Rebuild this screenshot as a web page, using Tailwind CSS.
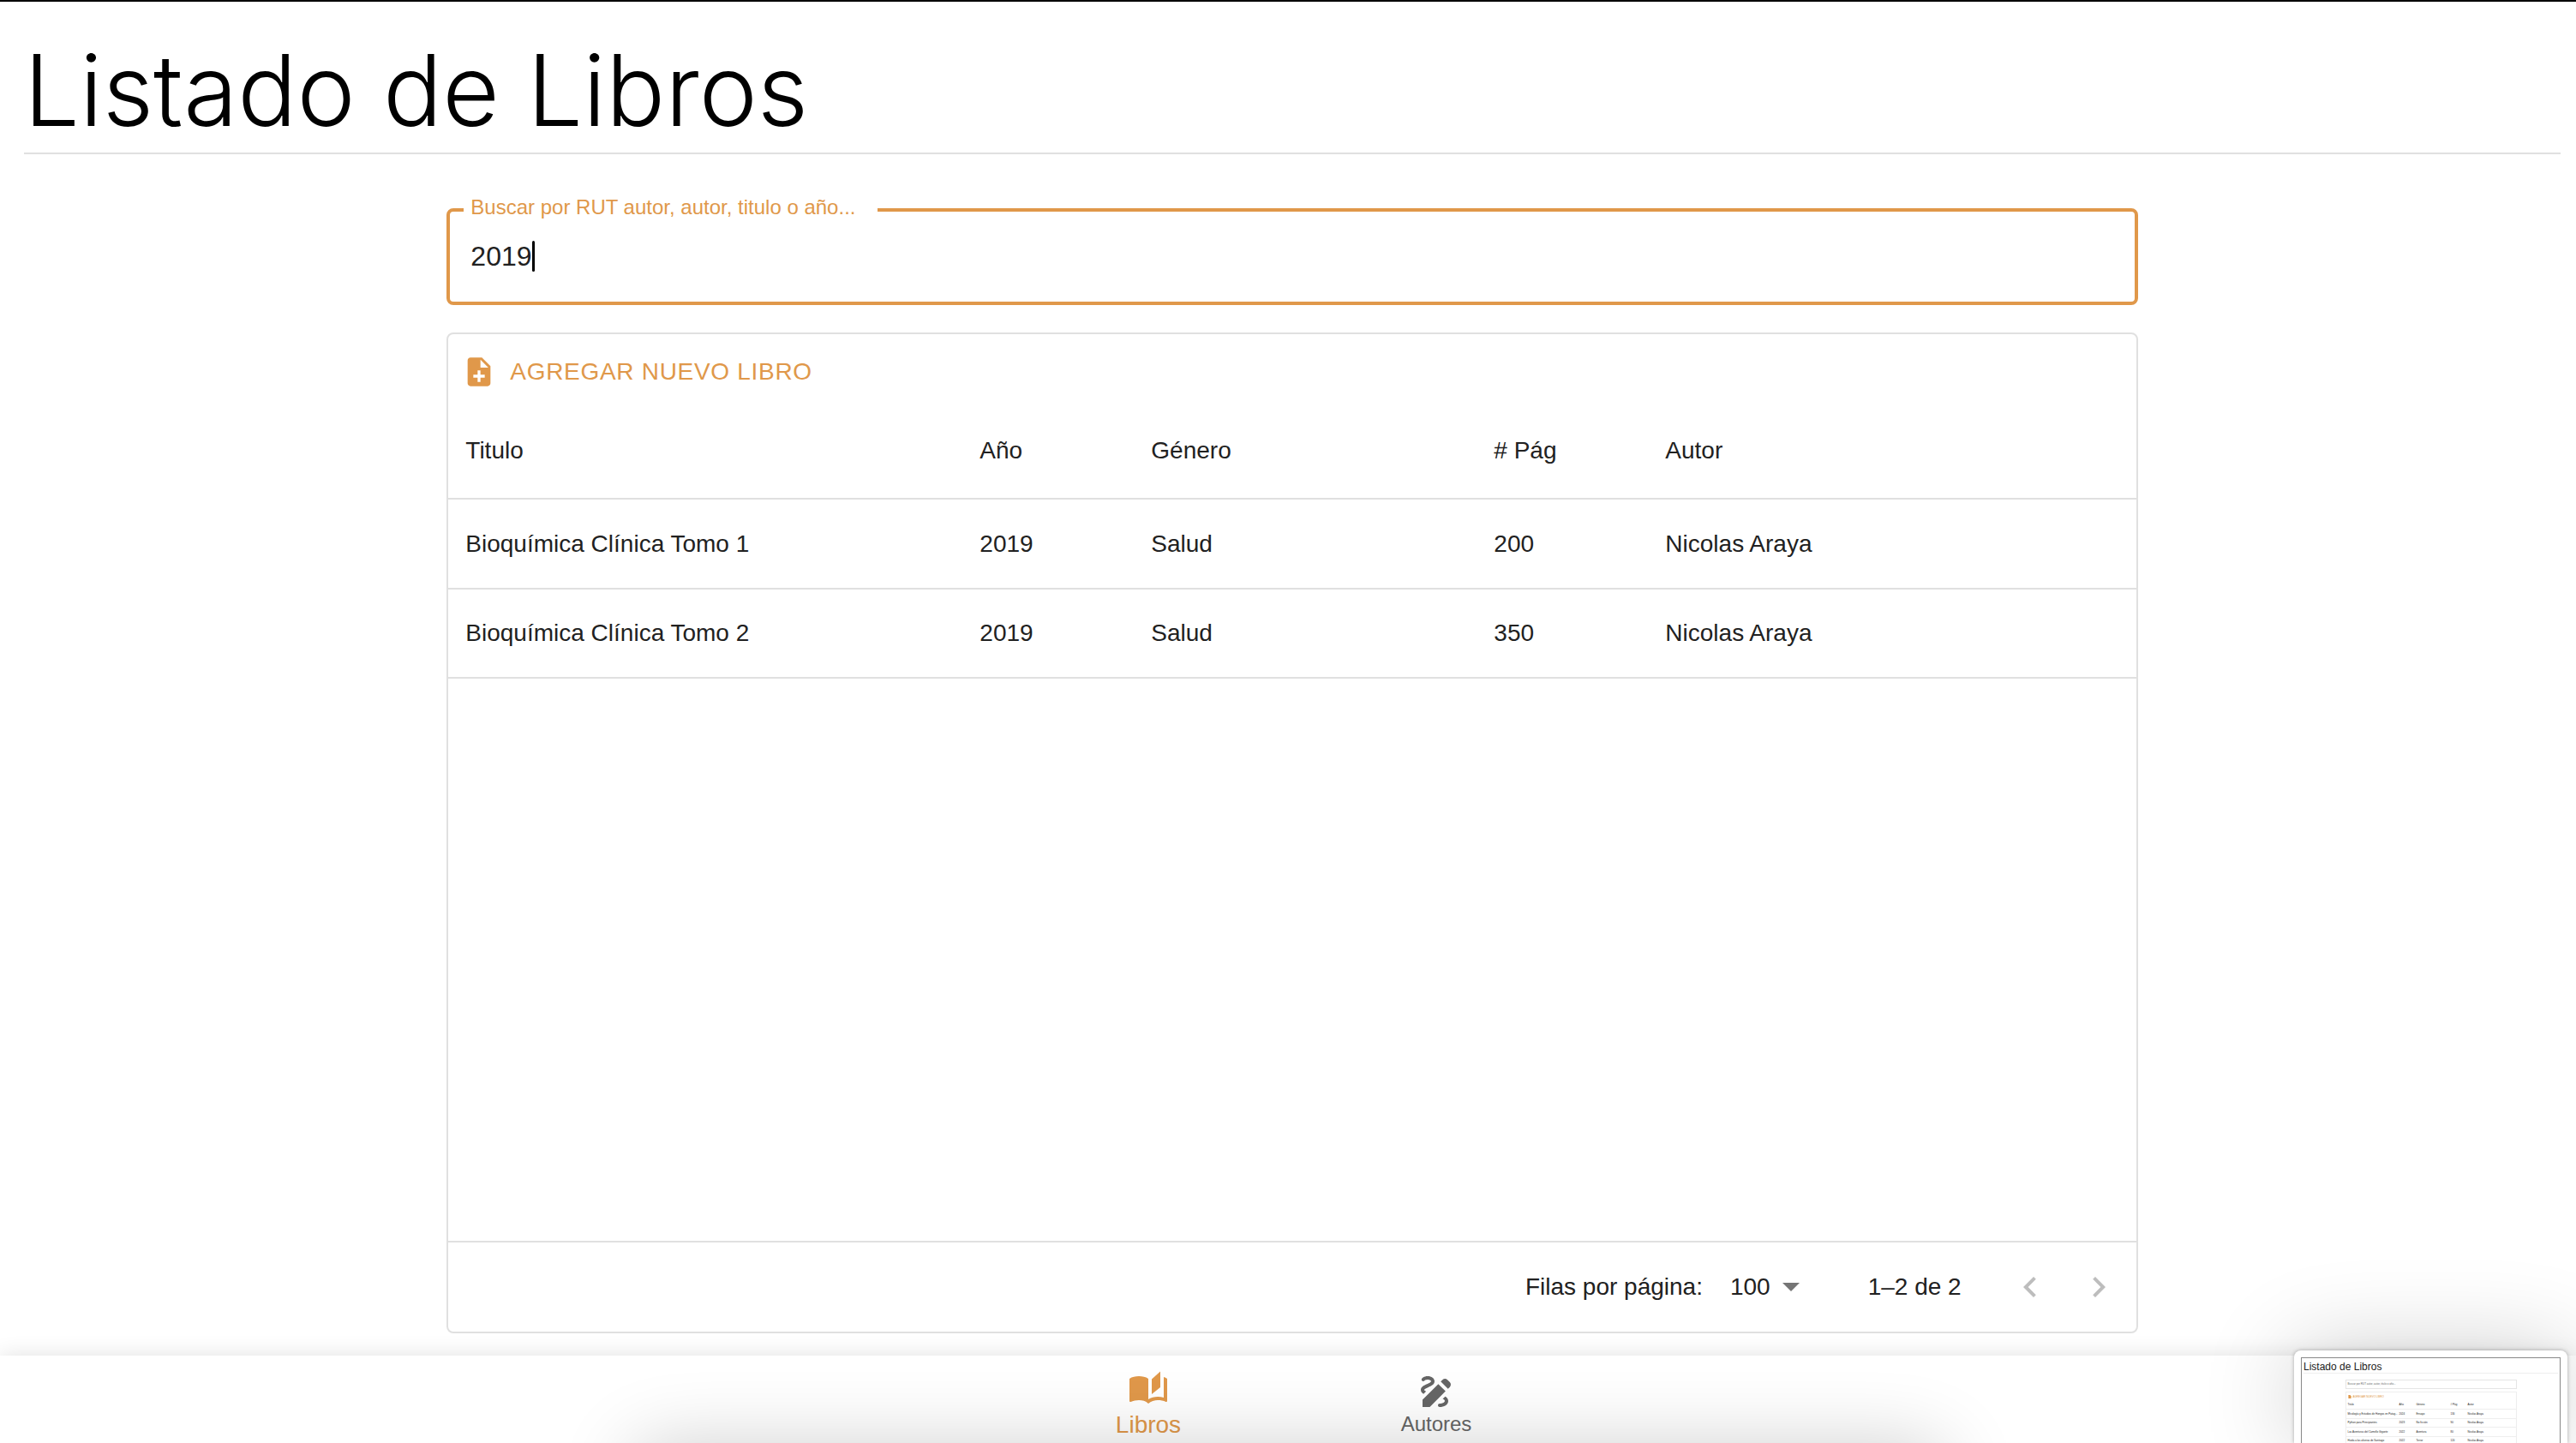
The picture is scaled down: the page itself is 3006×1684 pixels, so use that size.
<!DOCTYPE html>
<html lang="es">
<head>
<meta charset="utf-8">
<meta name="viewport" content="width=device-width, initial-scale=1">
<title>Listado de Libros</title>
<script src="https://cdn.jsdelivr.net/npm/@tailwindcss/browser@4"></script>
</head>
<body class="relative flex min-h-screen flex-col border-t-2 border-black bg-white font-['Liberation_Sans',Arial,sans-serif] text-[28px] leading-10 text-[#212121]">

<main class="flex flex-1 flex-col pr-[18px] pl-7">
  <header class="border-b-2 border-[#e0e0e0] pt-8">
    <h1 class="h-36 font-['Inter',sans-serif] text-[115px] leading-[144px] font-light text-black">Listado de Libros</h1>
  </header>

  <div class="grid flex-1 grid-cols-12 pt-[50px] pb-[26px]">
    <div class="col-span-8 col-start-3 flex flex-col">
      <fieldset class="rounded-lg border-4 border-[#e0984a] px-4">
        <legend class="pr-[26px] pb-[6px] pl-2 text-2xl leading-6 text-[#e0984a]"><label for="buscar">Buscar por RUT autor, autor, titulo o año...</label></legend>
        <div class="flex h-[92px] items-center pb-[14px] pl-2">
          <input id="buscar" type="text" value="2019" class="field-sizing-content text-[32px] leading-10 outline-none">
          <span class="h-9 w-[3px] rounded-full bg-black"></span>
        </div>
      </fieldset>

      <section class="mt-8 flex flex-1 flex-col rounded-lg border-2 border-[#e0e0e0]">
        <div class="flex h-20 items-center px-4 pt-2">
          <button type="button" class="flex items-center gap-4 tracking-wide text-[#e0984a] uppercase">
            <svg class="size-10" viewBox="0 0 24 24" fill="currentColor" aria-hidden="true"><path d="M14 2H6c-1.1 0-1.99.9-1.99 2L4 20c0 1.1.89 2 1.99 2H18c1.1 0 2-.9 2-2V8l-6-6zm2 14h-3v3h-2v-3H8v-2h3v-3h2v3h3v2zm-3-7V3.5L18.5 9H13z"/></svg>
            Agregar nuevo libro
          </button>
        </div>
        <table class="w-full table-fixed text-left">
          <colgroup><col class="w-[600px]"><col class="w-[200px]"><col class="w-[400px]"><col class="w-[200px]"><col></colgroup>
          <thead>
            <tr class="h-28 border-b-2 border-[#e0e0e0]">
              <th class="px-5 font-normal">Titulo</th><th class="px-5 font-normal">Año</th><th class="px-5 font-normal">Género</th><th class="px-5 font-normal"># Pág</th><th class="px-5 font-normal">Autor</th>
            </tr>
          </thead>
          <tbody>
            <tr class="h-[105px] border-b-2 border-[#e0e0e0]">
              <td class="px-5">Bioquímica Clínica Tomo 1</td><td class="px-5">2019</td><td class="px-5">Salud</td><td class="px-5">200</td><td class="px-5">Nicolas Araya</td>
            </tr>
            <tr class="h-[104px] border-b-2 border-[#e0e0e0]">
              <td class="px-5">Bioquímica Clínica Tomo 2</td><td class="px-5">2019</td><td class="px-5">Salud</td><td class="px-5">350</td><td class="px-5">Nicolas Araya</td>
            </tr>
          </tbody>
        </table>
        <footer class="mt-auto flex h-[106px] items-center justify-end border-t-2 border-[#e0e0e0] pr-5">
          <label for="filas">Filas por página:</label>
          <select id="filas" class="ml-8 appearance-none field-sizing-content outline-none"><option>100</option></select>
          <svg class="ml-[14px] h-[10px] w-5 text-[#757575]" viewBox="0 0 20 10" fill="currentColor" aria-hidden="true"><path d="M0 0h20L10 10z"/></svg>
          <span class="ml-20">1–2 de 2</span>
          <button type="button" disabled aria-label="Página anterior" class="ml-10 p-4 text-[#bdbdbd]"><svg class="size-12" viewBox="0 0 24 24" fill="currentColor"><path d="M15.41 7.41 14 6l-6 6 6 6 1.41-1.41L10.83 12z"/></svg></button>
          <button type="button" disabled aria-label="Página siguiente" class="py-4 pl-4 text-[#bdbdbd]"><svg class="size-12" viewBox="0 0 24 24" fill="currentColor"><path d="M10 6 8.59 7.41 13.17 12l-4.58 4.59L10 18l6-6z"/></svg></button>
        </footer>
      </section>
    </div>
  </div>
</main>

<nav class="flex h-[102px] justify-center bg-white pl-[10px] shadow-[0_0_24px_rgba(0,0,0,0.12)]">
  <a href="#libros" class="flex w-[336px] flex-col items-center pt-[15px] text-[#e0984a]">
    <svg class="size-12" viewBox="0 0 24 24" fill="currentColor" aria-hidden="true"><path d="M19 1.7 14 6.2v8.8l5-4zM1 6v13c0 .5.3.65.75.5C3 18.9 5.05 18.5 6.5 18.5c1.95 0 4.05.4 5.5 2V6c-1.450-1.1-3.550-1.5-5.500-1.500S2.450 4.900 1 6zM12 20.500c1.350-1.350 3.800-2 5.500-2 1.650 0 3.350.3 4.750 1 .4.15.75 0 .75-.45V6c-.6-.45-1.250-.75-2-1v12c-1.100-.35-2.300-.5-3.500-.5-1.700 0-4.150.65-5.500 1.500z"/></svg>
    <span class="leading-9">Libros</span>
  </a>
  <a href="#autores" class="flex w-[336px] flex-col items-center pt-[18px] text-2xl text-[#666]">
    <svg class="size-12" viewBox="0 0 24 24" fill="currentColor" aria-hidden="true"><path d="m18.85 10.39 1.06-1.06c.78-.78.78-2.05 0-2.83L18.5 5.09c-.78-.78-2.05-.78-2.83 0l-1.06 1.06 4.24 4.24zm-5.66-2.82L4 16.76V21h4.24l9.19-9.19-4.24-4.24zM19 17.500c0 2.190-2.540 3.500-5 3.500-.55 0-1-.45-1-1s.45-1 1-1c1.540 0 3-.73 3-1.500 0-.47-.48-.87-1.230-1.200l1.480-1.480c1.070.63 1.750 1.470 1.750 2.680zM4.580 13.350C3.610 12.790 3 12.060 3 11c0-1.800 1.890-2.630 3.560-3.360C7.590 7.180 9 6.560 9 6c0-.41-.78-1-2-1-1.260 0-1.800.61-1.830.64-.35.41-.98.46-1.400.12-.41-.34-.49-.95-.15-1.380C3.730 4.240 4.760 3 7 3s4 1.320 4 3c0 1.870-1.930 2.720-3.640 3.470C6.420 9.880 5 10.500 5 11c0 .31.43.6 1.070.86l-1.490 1.490z"/></svg>
    <span class="leading-7">Autores</span>
  </a>
</nav>

<!-- soft shadow rising from below the window -->
<div class="pointer-events-none absolute inset-0 overflow-hidden">
  <div class="absolute top-full right-[738px] left-[740px] mt-1 h-24 rounded-3xl shadow-[0_0_90px_rgba(0,0,0,0.2)]"></div>
</div>

<!-- floating preview of the full list -->
<aside class="absolute right-[10px] bottom-0 h-[108px] w-[319px] rounded-t-lg bg-white px-2 pt-2 shadow-[0_0_4px_rgba(0,0,0,0.3),0_0_110px_rgba(0,0,0,0.2)]">
  <div class="h-[100px] overflow-hidden border border-b-0 border-[#888] px-[2px] text-[3px] leading-[4px]">
    <div class="border-b border-[#eee] pt-[3px] text-xs leading-[14px]">Listado de Libros</div>
    <div class="mx-auto mt-[7px] w-[200px]">
      <div class="h-[11px] border border-[#e5e5e5] px-[2px] pt-[2px] text-[#666]">Buscar por RUT autor, autor, titulo o año...</div>
      <div class="mt-[3px] border border-b-0 border-[#eee]">
        <div class="flex h-[9px] items-center gap-[2px] px-[2px] text-[#e0984a]"><svg class="size-[4px]" viewBox="4 2 16 20" fill="currentColor"><path d="M14 2H4v20h16V8z"/></svg>AGREGAR NUEVO LIBRO</div>
        <table class="w-full table-fixed text-left whitespace-nowrap">
          <colgroup><col class="w-[60px]"><col class="w-5"><col class="w-10"><col class="w-5"><col></colgroup>
          <thead><tr class="h-[10px] border-b border-[#eee]"><th class="pl-[2px] font-normal">Titulo</th><th class="pl-[2px] font-normal">Año</th><th class="pl-[2px] font-normal">Género</th><th class="pl-[2px] font-normal"># Pág</th><th class="pl-[2px] font-normal">Autor</th></tr></thead>
          <tbody>
            <tr class="h-[11px] border-b border-[#eee]"><td class="pl-[2px]">Micología y Estudios de Hongos en Patag...</td><td class="pl-[2px]">2024</td><td class="pl-[2px]">Ensayo</td><td class="pl-[2px]">130</td><td class="pl-[2px]">Nicolas Araya</td></tr>
            <tr class="h-[10px] border-b border-[#eee]"><td class="pl-[2px]">Python para Principiantes</td><td class="pl-[2px]">2023</td><td class="pl-[2px]">No ficción</td><td class="pl-[2px]">90</td><td class="pl-[2px]">Nicolas Araya</td></tr>
            <tr class="h-[11px] border-b border-[#eee]"><td class="pl-[2px]">Las Aventuras del Camello Gigante</td><td class="pl-[2px]">2022</td><td class="pl-[2px]">Aventura</td><td class="pl-[2px]">80</td><td class="pl-[2px]">Nicolas Araya</td></tr>
            <tr class="h-[9px]"><td class="pl-[2px]">Huida a las afueras de Santiago</td><td class="pl-[2px]">2022</td><td class="pl-[2px]">Terror</td><td class="pl-[2px]">120</td><td class="pl-[2px]">Nicolas Araya</td></tr>
          </tbody>
        </table>
      </div>
    </div>
  </div>
</aside>

</body>
</html>
